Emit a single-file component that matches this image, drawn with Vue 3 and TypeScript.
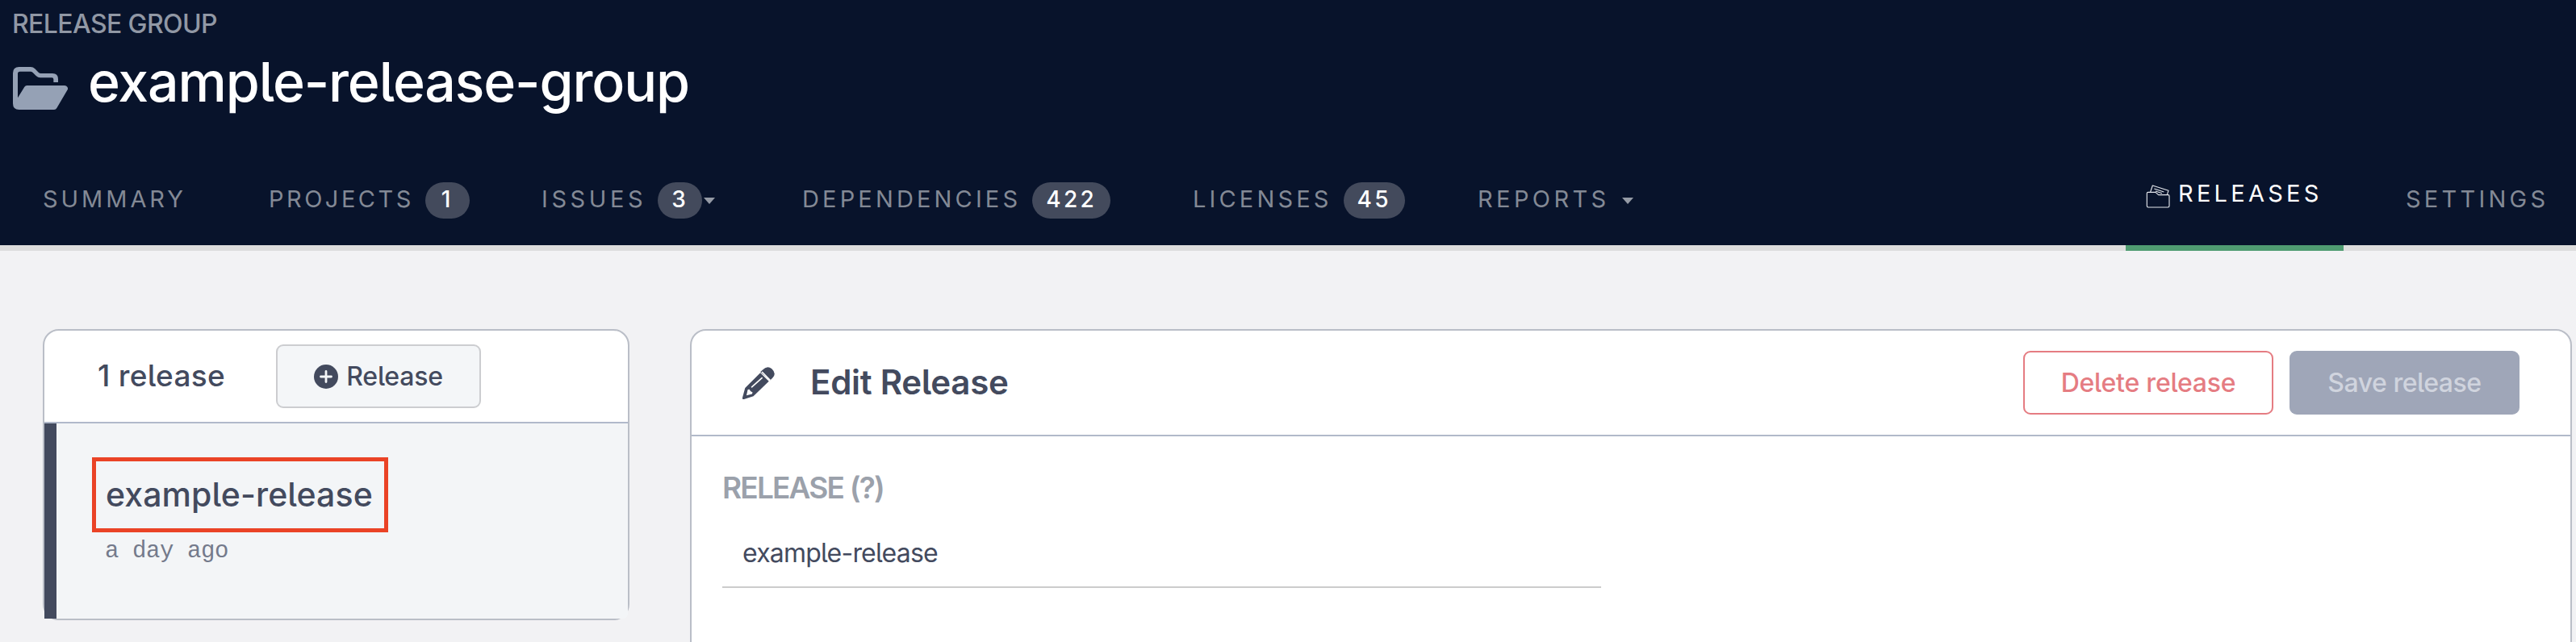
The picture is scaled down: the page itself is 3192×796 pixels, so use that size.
<script setup lang="ts">
interface NavItem {
  id: string
  label: string
  count?: number
  menu?: boolean
  active?: boolean
}

const navItems: NavItem[] = [
  { id: 'summary', label: 'SUMMARY' },
  { id: 'projects', label: 'PROJECTS', count: 1 },
  { id: 'issues', label: 'ISSUES', count: 3, menu: true },
  { id: 'dependencies', label: 'DEPENDENCIES', count: 422 },
  { id: 'licenses', label: 'LICENSES', count: 45 },
  { id: 'reports', label: 'REPORTS', menu: true },
  { id: 'releases', label: 'RELEASES', active: true },
  { id: 'settings', label: 'SETTINGS' },
]

const releaseName = 'example-release'
</script>

<template>
  <div class="page">
    <header class="top">
      <div class="kicker">RELEASE GROUP</div>
      <div class="title-row">
        <svg class="folder" viewBox="48 69 204 159" aria-hidden="true">
          <path d="M66 184V94q0-8 8-8h39q5 0 9 4l12 12q7 7 16 7h43q6 0 6 6v11h17v-12q0-21-21-21h-43q-5 0-9-4l-13-13q-7-7-16-7H71q-23 0-23 23v113q0 23 23 23h130q7 0 10-6l40-68q3-5-1-11-3-5-10-5H100q-6 0-9 5Z" fill="#95a1b5" />
        </svg>
        <h1>example-release-group</h1>
      </div>
      <nav>
        <a
          v-for="item in navItems"
          :key="item.id"
          class="nav-item"
          :class="[item.id, { active: item.active }]"
        >
          <svg v-if="item.active" class="stack" viewBox="117 58 88 87" aria-hidden="true">
            <g fill="none" stroke="#e4e7ec" stroke-width="3.4" stroke-linejoin="round">
              <path d="M120 90q0-4 4-4h28l11 10h36q4 0 4 4v37q0 5-5 5h-73q-5 0-5-5Z" />
              <path d="M133 85l8-24 59 19-5 15M147 73l36 12M152 82l24 8" />
            </g>
          </svg>
          <span class="nav-label">{{ item.label }}</span>
          <span v-if="item.count !== undefined" class="badge">{{ item.count }}</span>
          <span v-if="item.menu" class="caret"></span>
        </a>
      </nav>
    </header>

    <main>
      <section class="card list">
        <div class="list-head">
          <h2>1 release</h2>
          <button class="btn add">
            <svg class="plus" viewBox="0 0 30 30" aria-hidden="true">
              <circle cx="15" cy="15" r="15" fill="#434a5e" />
              <path d="M15 8.5v13M8.5 15h13" stroke="#f4f6f8" stroke-width="2.8" stroke-linecap="round" />
            </svg>
            <span>Release</span>
          </button>
        </div>
        <div class="list-item">
          <div class="highlight">{{ releaseName }}</div>
          <div class="time">a day ago</div>
        </div>
      </section>

      <section class="card detail">
        <div class="detail-head">
          <svg class="pencil" viewBox="120 71 121 121" aria-hidden="true">
            <path d="M195 82q18-19 35-4 19 18 3 34l-9 9-37-31Z" fill="#434a5e" />
            <path d="M187 93l32 32-58 56-35 11q-7 2-6-6l10-36Z" fill="#434a5e" />
            <path d="M193 89l31 32" stroke="#fff" stroke-width="5" />
            <path d="M193 112l-38 34" stroke="#fff" stroke-width="5" stroke-linecap="round" />
            <path d="M140 156l6-1q3 9 12 11l-2 6-21 6Z" fill="#fff" />
          </svg>
          <h2>Edit Release</h2>
          <div class="actions">
            <button class="btn delete">Delete release</button>
            <button class="btn save" disabled>Save release</button>
          </div>
        </div>
        <div class="detail-body">
          <label>RELEASE (?)</label>
          <div class="field">{{ releaseName }}</div>
        </div>
      </section>
    </main>
  </div>
</template>

<style>
body {
  margin: 0;
  overflow: hidden;
}
</style>

<style scoped>
.page {
  height: 796px;
  overflow: hidden;
  background: #f2f2f4;
  color: #434a5e;
  font-family: "Inter", "Liberation Sans", sans-serif;
  font-feature-settings: "cv05";
}
.page * {
  box-sizing: border-box;
}
h1,
h2 {
  margin: 0;
}
.top {
  height: 311px;
  background: #08132b;
  border-bottom: 7px solid #dddddd;
}
.kicker {
  height: 50px;
  padding: 9px 0 0 15px;
  color: #9198a5;
  font-size: 32px;
  font-weight: 500;
  line-height: 41px;
  letter-spacing: -0.61px;
}
.title-row {
  display: flex;
  height: 103px;
  padding-left: 16px;
}
.folder {
  width: 68px;
  height: 53px;
  margin-top: 33px;
}
h1 {
  margin-left: 25px;
  color: #fff;
  font-size: 68px;
  font-weight: 500;
  line-height: 103px;
  letter-spacing: -1.14px;
}
nav {
  display: grid;
  grid-template-columns: 280px 338px 323px 484px 353px 803px 347px 1fr;
  height: 158px;
  padding-left: 53px;
}
.nav-item {
  display: flex;
  align-items: center;
  height: 45px;
  margin-top: 73px;
  color: #838995;
  font-size: 29px;
  white-space: nowrap;
}
.nav-label {
  line-height: 41px;
  padding-bottom: 4px;
  letter-spacing: 4.25px;
}
.summary .nav-label { letter-spacing: 3.95px; }
.projects .nav-label { letter-spacing: 3.5px; }
.issues .nav-label { letter-spacing: 4.6px; }
.dependencies .nav-label { letter-spacing: 4.15px; }
.licenses .nav-label { letter-spacing: 4.15px; }
.reports .nav-label { letter-spacing: 4.4px; }
.badge {
  height: 45px;
  margin-left: 14px;
  padding: 0 17px;
  border-radius: 23px;
  background: #434a5c;
  color: #fff;
  font-size: 28px;
  font-weight: 500;
  line-height: 43px;
  letter-spacing: 3.4px;
}
.projects .badge {
  padding: 0 20px;
}
.caret {
  margin-left: 2px;
  margin-top: 1px;
  border: 7.5px solid transparent;
  border-top: 8px solid #959ba6;
  border-bottom: 0;
}
.reports .caret {
  margin-left: 15px;
}
.nav-item.active {
  align-items: flex-start;
  width: 270px;
  height: 158px;
  margin-top: 0;
  padding: 66px 0 0 25px;
  border-bottom: 7px solid #4f9c71;
  color: #fff;
}
.active .nav-label {
  padding: 0;
}
.stack {
  width: 30px;
  height: 29px;
  margin: 10px 10px 0 0;
}
main {
  display: flex;
  align-items: flex-start;
  gap: 75px;
  padding: 97px 0 0 53px;
}
.card {
  flex: none;
  border: 2px solid #babec7;
  border-radius: 20px;
  background: #fff;
}
.list {
  width: 727px;
}
.list-head {
  display: flex;
  align-items: center;
  height: 115px;
  padding-left: 66px;
  border-bottom: 2px solid #b1b9ca;
}
.list-head h2 {
  width: 221px;
  font-size: 37px;
  font-weight: 500;
  line-height: 45px;
  letter-spacing: 0.3px;
  padding-bottom: 2px;
}
.btn {
  display: flex;
  align-items: center;
  justify-content: center;
  height: 79px;
  padding: 0;
  border: 2px solid transparent;
  border-radius: 9px;
  font: 500 32px "Inter", "Liberation Sans", sans-serif;
  font-feature-settings: "cv05";
  letter-spacing: -0.22px;
  white-space: nowrap;
}
.add {
  width: 254px;
  gap: 10px;
  background: #f4f6f8;
  border-color: #cccdd0;
  color: #434a5e;
}
.plus {
  width: 30px;
  height: 30px;
}
.list-item {
  height: 242px;
  padding: 42px 0 0 44px;
  border-left: 15px solid #434a5e;
  border-bottom-right-radius: 6px;
  background: #f3f5f7;
}
.highlight {
  width: 367px;
  height: 93px;
  padding-left: 12px;
  border: 5px solid #ea4326;
  font-size: 41px;
  font-weight: 500;
  line-height: 82px;
  letter-spacing: 0.1px;
}
.time {
  margin-top: 4px;
  padding-left: 16px;
  color: #747a8b;
  font-family: "Liberation Mono", monospace;
  font-size: 29px;
  line-height: 40px;
  letter-spacing: -0.4px;
}
.detail {
  width: 2332px;
  height: 450px;
}
.detail-head {
  display: flex;
  align-items: center;
  height: 131px;
  padding: 0 63px;
  border-bottom: 2px solid #b1b9ca;
}
.pencil {
  width: 40px;
  height: 40px;
}
.detail-head h2 {
  margin-left: 44px;
  font-size: 42px;
  font-weight: 600;
  line-height: 51px;
  letter-spacing: -0.27px;
  padding-bottom: 2px;
}
.actions {
  display: flex;
  gap: 20px;
  margin-left: auto;
}
.delete {
  width: 310px;
  border-color: #e57c82;
  background: #fff;
  color: #e57c82;
}
.save {
  width: 285px;
  background: #9fa6b8;
  color: #d0d4de;
  letter-spacing: -0.47px;
}
.detail-body {
  padding: 41px 0 0 38px;
}
label {
  display: block;
  height: 45px;
  color: #9ba1ab;
  font-size: 37px;
  font-weight: 600;
  line-height: 45px;
  letter-spacing: -1.81px;
}
.field {
  width: 1089px;
  height: 102px;
  padding: 41px 0 0 25px;
  border-bottom: 2px solid #cccccc;
  font-size: 32px;
  line-height: 35px;
  letter-spacing: -0.79px;
}
</style>
